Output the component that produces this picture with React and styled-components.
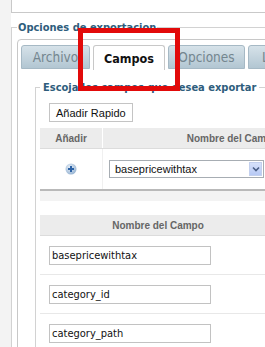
import styled, { createGlobalStyle } from 'styled-components';

const Global = createGlobalStyle`
  html, body {
    margin: 0;
    padding: 0;
    overflow: hidden;
    background: #fff;
  }
`;

const Page = styled.div`
  position: relative;
  width: 265px;
  height: 347px;
  overflow: hidden;
  background: #f3f3f3;
  padding-left: 11px;
  box-sizing: border-box;
  font-family: 'Liberation Sans', Arial, sans-serif;
`;

const Content = styled.div`
  width: 420px;
  height: 100%;
  background: #fff;
`;

const TopBox = styled.div`
  height: 12px;
  border-left: 1px solid #c9c9c9;
  border-bottom: 1px solid #c9c9c9;
`;

const Fieldset = styled.fieldset`
  margin: ${(p) => p.$margin || '0'};
  padding: ${(p) => p.$padding || '0'};
  border: 1px solid #d2d2d2;
  min-width: 0;
`;

const Legend = styled.legend`
  padding: ${(p) => p.$pad || '0 1px'};
  font-family: 'DejaVu Sans Condensed', 'DejaVu Sans', sans-serif;
  font-weight: bold;
  font-size: 11px;
  line-height: 13px;
  color: #2e5d7c;
`;

const TabBox = styled.div`
  border: 1px solid #c8c8c8;
  border-radius: 4px;
  height: 400px;
`;

const TabStrip = styled.div`
  display: flex;
  gap: 3px;
  padding: 5px 0 0 3px;
`;

const Tab = styled.div`
  flex: none;
  box-sizing: border-box;
  width: ${(p) => p.$w}px;
  height: ${(p) => (p.$active ? 25 : 24)}px;
  display: flex;
  align-items: center;
  justify-content: center;
  border: 1px solid ${(p) => (p.$active ? '#c8c8c8' : '#a6b9c5')};
  border-bottom: ${(p) => (p.$active ? 'none' : '1px solid #a6b9c5')};
  border-radius: 3px 3px 0 0;
  background: ${(p) =>
    p.$active ? '#fff' : 'linear-gradient(#d6e2e9, #b2c6d2)'};
  color: ${(p) => (p.$active ? '#111' : '#74868f')};
  font-family: 'DejaVu Sans Condensed', 'DejaVu Sans', sans-serif;
  font-size: ${(p) => (p.$active ? '12.5px' : '13.5px')};
  font-weight: ${(p) => (p.$active ? 'bold' : 'normal')};
  white-space: nowrap;
  overflow: hidden;
`;

const Panel = styled.div`
  padding: 11px 0 0 17px;
`;

const QuickButton = styled.button`
  display: block;
  margin: 9px 0 0 9px;
  height: 19px;
  padding: 0 6px;
  background: #fff;
  border: 1px solid #c4c4c4;
  font-family: 'Liberation Sans', Arial, sans-serif;
  font-size: 11px;
  color: #111;
`;

const Table = styled.table`
  border-collapse: collapse;
  width: ${(p) => p.$width}px;
  margin-top: ${(p) => p.$top}px;
`;

const Th = styled.th`
  height: 20px;
  padding: 0;
  background: #ececec;
  border-left: ${(p) => (p.$divider ? '1px solid #fff' : 'none')};
  border-bottom: 1px solid #dcdcdc;
  color: #666;
  font-size: 10px;
  font-weight: bold;
  text-align: center;
  white-space: nowrap;
  width: ${(p) => (p.$w ? `${p.$w}px` : 'auto')};
`;

const Td = styled.td`
  height: ${(p) => p.$h}px;
  padding: 0 0 0 ${(p) => p.$pl || 0}px;
  border-left: ${(p) => (p.$divider ? '1px solid #f0f0f0' : 'none')};
  border-bottom: 1px solid ${(p) => p.$line || '#e8e8e8'};
  text-align: ${(p) => (p.$center ? 'center' : 'left')};
  vertical-align: middle;
`;

const Footer = styled.td`
  height: 10px;
  padding: 0;
  background: #f3f3f3;
  border-top: 2px solid #b9b9b9;
`;

const Select = styled.div`
  width: 155px;
  height: 18px;
  box-sizing: border-box;
  border: 1px solid #a7adb3;
  display: flex;
  align-items: center;
  font-size: 11px;
  color: #111;
`;

const SelectText = styled.span`
  flex: 1;
  padding-left: 5px;
`;

const Arrow = styled.span`
  width: 13px;
  height: 14px;
  margin-right: 1px;
  display: flex;
  align-items: center;
  justify-content: center;
  background: linear-gradient(#d6e1fb, #b7c9f5);
  border: 1px solid #c3d0ee;
  box-sizing: border-box;
`;

const Field = styled.div`
  width: 162px;
  height: 19px;
  box-sizing: border-box;
  border: 1px solid #c2c2c2;
  padding-left: 2px;
  display: flex;
  align-items: center;
  font-family: 'DejaVu Sans Condensed', 'DejaVu Sans', sans-serif;
  font-size: 11px;
  color: #111;
`;

const Highlight = styled.div`
  position: absolute;
  left: 78px;
  top: 28px;
  width: 102px;
  height: 63px;
  box-sizing: border-box;
  border: 5px solid #e20a0a;
  pointer-events: none;
`;

const PlusIcon = () => (
  <svg width="12" height="12" viewBox="0 0 12 12" style={{ display: 'block', margin: '0 auto' }}>
    <defs>
      <radialGradient id="pg" cx="40%" cy="35%" r="65%">
        <stop offset="0" stopColor="#e6eef7" />
        <stop offset="1" stopColor="#9ab6d4" />
      </radialGradient>
    </defs>
    <circle cx="6" cy="6" r="5.5" fill="url(#pg)" />
    <path d="M6 3v6M3 6h6" stroke="#2c62a6" strokeWidth="2" />
  </svg>
);

const fields = ['basepricewithtax', 'category_id', 'category_path'];

export default function App() {
  return (
    <Page>
      <Global />
      <Content>
        <TopBox />
        <Fieldset $margin="8px 0 0 0" $padding="5px 0 0 5px">
          <Legend>Opciones de exportacion</Legend>
          <TabBox>
            <TabStrip>
              <Tab $w={69}>Archivo</Tab>
              <Tab $w={72} $active>Campos</Tab>
              <Tab $w={77}>Opciones</Tab>
              <Tab $w={72}>Limites</Tab>
            </TabStrip>
            <Panel>
              <Fieldset $padding="0 0 0 4px">
                <Legend $pad="0 3px">Escoja los campos que desea exportar</Legend>
                <QuickButton>Añadir Rapido</QuickButton>
                <Table $width={322} $top={6}>
                  <thead>
                    <tr>
                      <Th $w={62}>Añadir</Th>
                      <Th $divider>Nombre del Campo</Th>
                    </tr>
                  </thead>
                  <tbody>
                    <tr>
                      <Td $h={40} $center $line="#fff">
                        <PlusIcon />
                      </Td>
                      <Td $h={40} $pl={6} $divider $line="#fff">
                        <Select>
                          <SelectText>basepricewithtax</SelectText>
                          <Arrow>
                            <svg width="8" height="6" viewBox="0 0 8 6">
                              <path d="M1 1.5l3 3 3-3" fill="none" stroke="#4a5f86" strokeWidth="1.6" />
                            </svg>
                          </Arrow>
                        </Select>
                      </Td>
                    </tr>
                    <tr>
                      <Footer colSpan={2} />
                    </tr>
                  </tbody>
                </Table>
                <Table $width={236} $top={14}>
                  <thead>
                    <tr>
                      <Th>Nombre del Campo</Th>
                    </tr>
                  </thead>
                  <tbody>
                    {fields.map((f) => (
                      <tr key={f}>
                        <Td $h={38} $pl={9}>
                          <Field>{f}</Field>
                        </Td>
                      </tr>
                    ))}
                  </tbody>
                </Table>
              </Fieldset>
            </Panel>
          </TabBox>
        </Fieldset>
      </Content>
      <Highlight />
    </Page>
  );
}
